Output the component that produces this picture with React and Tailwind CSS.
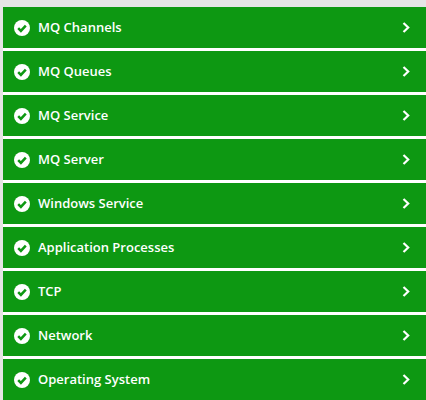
const rows = ["MQ Channels","MQ Queues","MQ Service","MQ Server","Windows Service","Application Processes","TCP","Network","Operating System"];

function Check() {
  return (
    <svg width="16" height="16" viewBox="0 0 16 16" className="shrink-0">
      <circle cx="8" cy="8" r="8" fill="#fff" />
      <path d="M4.2 8.2 L6.9 10.9 L11.8 5.6" fill="none" stroke="#0d9812" strokeWidth="2.5" />
    </svg>
  );
}

function Chevron() {
  return (
    <svg width="8" height="12" viewBox="0 0 8 12" className="shrink-0">
      <path d="M1.5 1 L6.2 5.5 L1.5 10" fill="none" stroke="#fff" strokeWidth="2.2" />
    </svg>
  );
}

export default function App() {
  return (
    <div className="h-[400px] w-[426px] overflow-hidden bg-[#e5e5e5] pt-[7px] pl-[3px] font-['Open_Sans',sans-serif]">
      <div className="flex flex-col gap-[3px] bg-white">
        {rows.map((r) => (
          <div key={r} className="flex h-[41px] items-center bg-[#0d9812] pl-[11px] pr-[16px] text-[13px] font-semibold text-white">
            <Check />
            <span className="ml-[8px] flex-1">{r}</span>
            <Chevron />
          </div>
        ))}
      </div>
    </div>
  );
}
